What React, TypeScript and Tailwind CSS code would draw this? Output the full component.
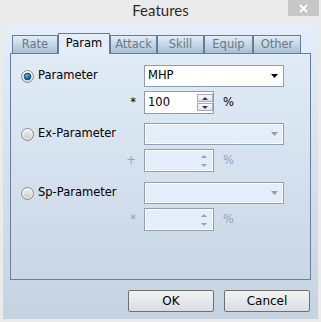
import React from "react"

const tabs = [
  { label: "Rate", w: "w-[46px]" },
  { label: "Param", w: "w-[52px]", active: true },
  { label: "Attack", w: "w-[47px]" },
  { label: "Skill", w: "w-[47px]" },
  { label: "Equip", w: "w-[49px]" },
  { label: "Other", w: "w-[48px]" },
]

function Radio({ checked }: { checked?: boolean }) {
  return (
    <svg width="13" height="13" viewBox="0 0 13 13">
      <defs>
        <linearGradient id="rg" x1="0" y1="0" x2="0" y2="1">
          <stop offset="0" stopColor="#f4f4f4" />
          <stop offset="1" stopColor="#c6c6c6" />
        </linearGradient>
        <radialGradient id="rd" cx="0.4" cy="0.35" r="0.7">
          <stop offset="0" stopColor="#5bb0f0" />
          <stop offset="1" stopColor="#0a3d78" />
        </radialGradient>
      </defs>
      <circle cx="6.5" cy="6.5" r="6" fill="url(#rg)" stroke="#8a8a8a" />
      <circle cx="6.5" cy="6.5" r="4.6" fill="none" stroke="#ffffff" strokeOpacity="0.7" />
      {checked && <circle cx="6.5" cy="6.5" r="3.4" fill="url(#rd)" stroke="#1d3b5e" strokeWidth="0.7" />}
    </svg>
  )
}

function Combo({ value, disabled }: { value?: string; disabled?: boolean }) {
  return (
    <div
      className={
        disabled
          ? "w-[140px] h-[22px] border border-[#8fa0b3] bg-[#e3eefa] shadow-[inset_0_0_0_1px_#ffffff] flex items-center justify-between pl-[3px] pr-[5px]"
          : "w-[140px] h-[22px] border border-[#8d9db0] bg-white flex items-center justify-between pl-[3px] pr-[5px]"
      }
    >
      <span>{value}</span>
      <svg width="7" height="4" viewBox="0 0 7 4">
        <path d="M0 0h7L3.5 4z" fill={disabled ? "#9a9cbc" : "#000000"} />
      </svg>
    </div>
  )
}

function Arrow({ up, color }: { up?: boolean; color: string }) {
  return (
    <svg width="6" height="3" viewBox="0 0 6 3">
      <path d={up ? "M0 3h6L3 0z" : "M0 0h6L3 3z"} fill={color} />
    </svg>
  )
}

function Spin({ value, disabled }: { value?: string; disabled?: boolean }) {
  if (disabled) {
    return (
      <div className="w-[70px] h-[23px] border border-[#8fa0b3] bg-[#e3eefa] shadow-[inset_0_0_0_1px_#ffffff] flex items-center">
        <span className="flex-1" />
        <div className="w-[16px] mr-[1px] flex flex-col items-center gap-[6px]">
          <Arrow up color="#9a9cbc" />
          <Arrow color="#9a9cbc" />
        </div>
      </div>
    )
  }
  return (
    <div className="w-[70px] h-[23px] border border-[#8d9db0] bg-white flex items-center">
      <span className="flex-1 pl-[3px]">{value}</span>
      <div className="w-[16px] flex flex-col gap-[1px]">
        <div className="h-[8px] border border-[#a3acb8] bg-gradient-to-b from-[#f8f8f8] to-[#dde2e8] flex items-center justify-center">
          <Arrow up color="#3a3a3a" />
        </div>
        <div className="h-[8px] border border-[#a3acb8] bg-gradient-to-b from-[#f8f8f8] to-[#dde2e8] flex items-center justify-center">
          <Arrow color="#3a3a3a" />
        </div>
      </div>
    </div>
  )
}

function Group({ label, op, checked, value, amount }: { label: string; op: string; checked?: boolean; value?: string; amount?: string }) {
  const disabled = !checked
  return (
    <div className="flex">
      <div className="w-[123px] flex flex-col">
        <div className="h-[22px] flex items-center gap-[4px]">
          <Radio checked={checked} />
          <span>{label}</span>
        </div>
        <div className={disabled ? "h-[23px] mt-[4px] flex items-center justify-end pr-[8px] text-[#9a9cbc]" : "h-[23px] mt-[4px] flex items-center justify-end pr-[8px]"}>
          {op}
        </div>
      </div>
      <div className="flex flex-col gap-[4px]">
        <Combo value={value} disabled={disabled} />
        <div className="flex items-center gap-[9px]">
          <Spin value={amount} disabled={disabled} />
          <span className={disabled ? "text-[#9a9cbc]" : ""}>%</span>
        </div>
      </div>
    </div>
  )
}

export default function App() {
  return (
    <div className="w-[321px] h-[322px] bg-[#ebebeb] flex flex-col font-['DejaVu_Sans',sans-serif] text-[11.5px] text-black">
      <div className="relative h-[25px] flex justify-center">
        <span className="font-['Lato',sans-serif] text-[15px] leading-[21px] text-[#2b2b2b]">Features</span>
        <div className="absolute right-[2px] top-0 w-[31px] h-[16px] bg-[#c7c7c7] flex items-center justify-center">
          <svg width="9" height="9" viewBox="0 0 9 9">
            <path d="M1 1L8 8M8 1L1 8" stroke="#ffffff" strokeWidth="1.8" />
          </svg>
        </div>
      </div>

      <div className="mx-[3px] h-[294px] bg-gradient-to-b from-[#e4eefa] to-[#c5d3e1] pt-[8px] pl-[7px] flex flex-col">
        <div className="h-[20px] pl-[2px] flex items-end relative z-10">
          {tabs.map((t) =>
            t.active ? (
              <div key={t.label} className={`${t.w} h-[21px] -mb-px border border-b-0 border-[#6a7a96] bg-[#e4eefa] flex items-center justify-center pb-[1px]`}>
                {t.label}
              </div>
            ) : (
              <div key={t.label} className={`${t.w} h-[18px] border border-b-0 border-[#6a7a96] bg-gradient-to-b from-[#e2edf7] to-[#a6c0d3] text-[#6b7788] flex items-center justify-center`}>
                {t.label}
              </div>
            )
          )}
        </div>

        <div className="w-[301px] h-[227px] border border-[#6a7e9a] pt-[11px] pl-[10px] flex flex-col">
          <Group label="Parameter" op="*" checked value="MHP" amount="100" />
          <div className="mt-[9px]">
            <Group label="Ex-Parameter" op="+" />
          </div>
          <div className="mt-[10px]">
            <Group label="Sp-Parameter" op="*" />
          </div>
        </div>

        <div className="mt-[10px] pr-[8px] flex justify-end gap-[10px] text-[12px]">
          <div className="w-[86px] h-[22px] border border-[#707070] rounded-[2px] bg-gradient-to-b from-[#f2f2f2] to-[#d9dde2] flex items-center justify-center">OK</div>
          <div className="w-[86px] h-[22px] border border-[#707070] rounded-[2px] bg-gradient-to-b from-[#f2f2f2] to-[#d9dde2] flex items-center justify-center">Cancel</div>
        </div>
      </div>
    </div>
  )
}
